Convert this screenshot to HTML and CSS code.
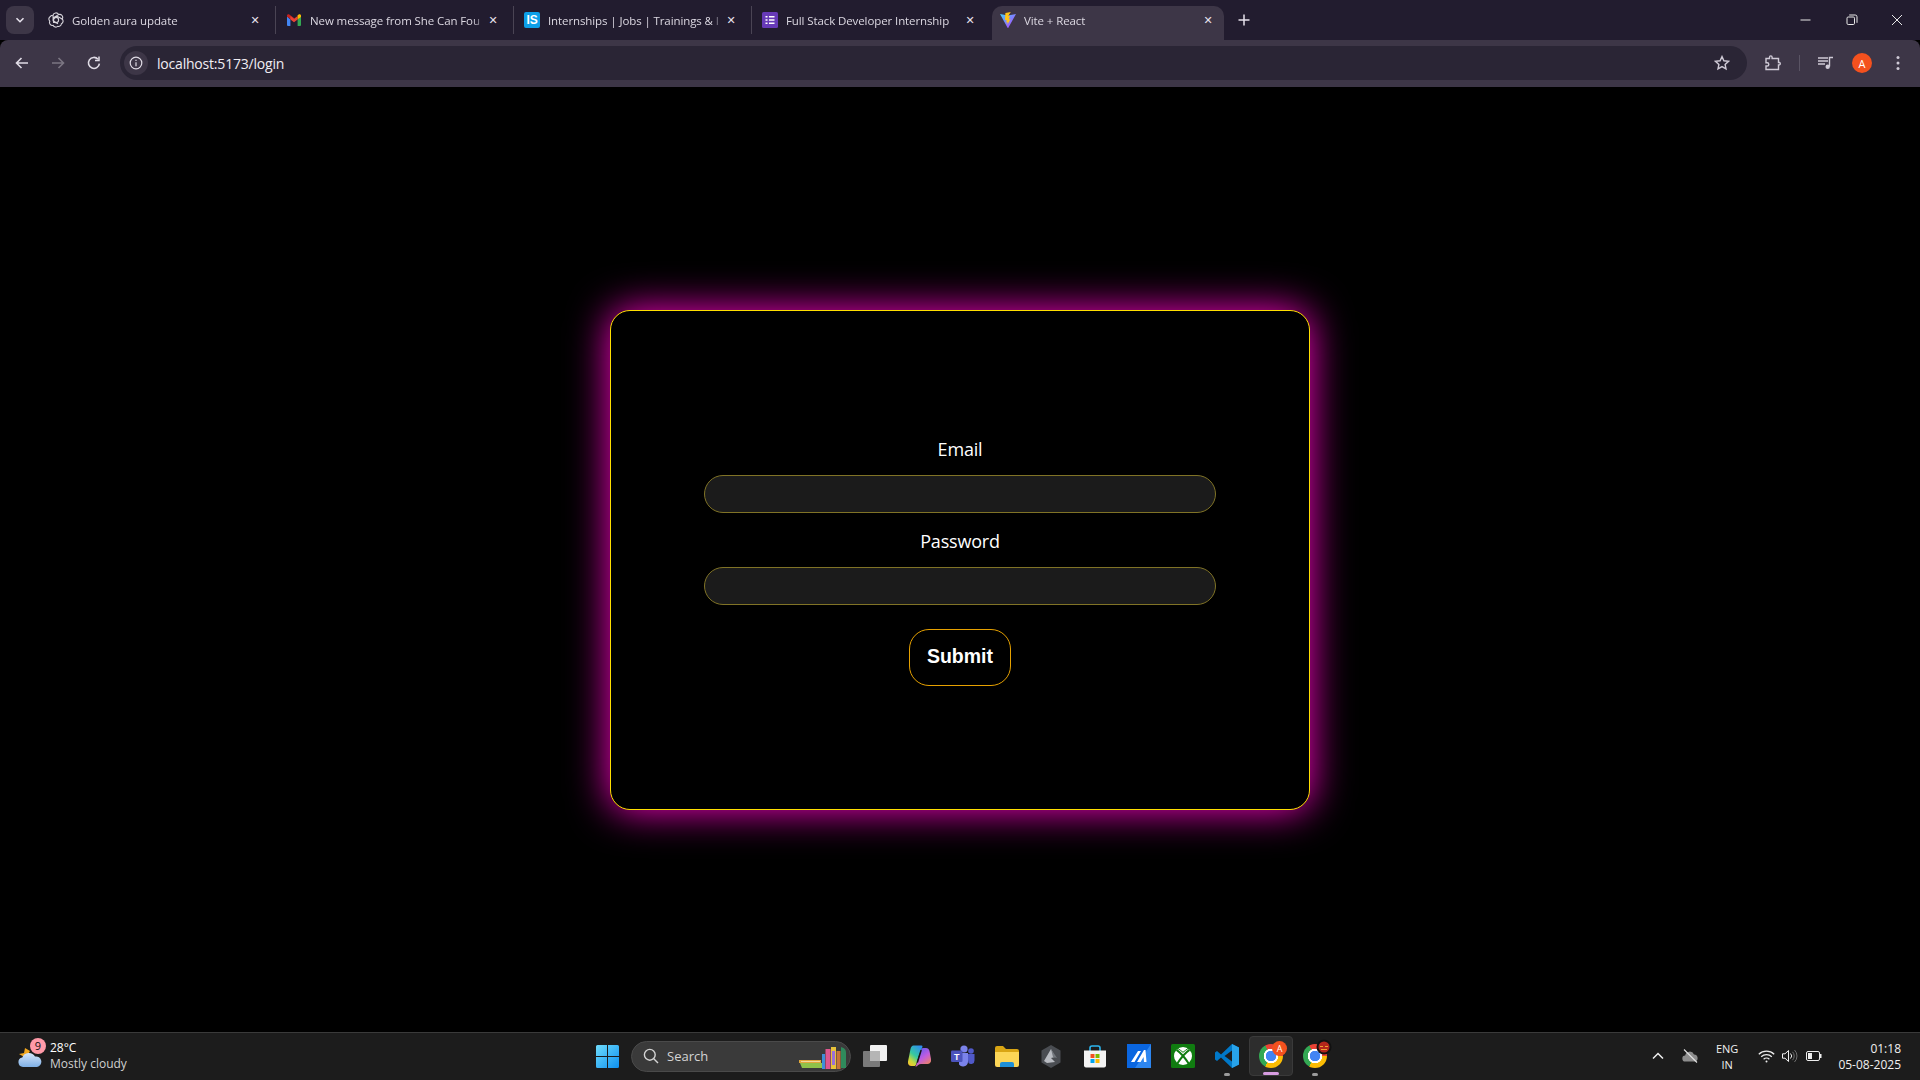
FILE: index.html
```html
<!DOCTYPE html>
<html>
<head>
    <title>Vite + React</title>
    <link rel="stylesheet" href="styles.css">
</head>
<body>
<div class="window">
    <div class="tabstrip">
        <div class="tab-menu">
            <svg width="10" height="10" viewBox="0 0 10 10"><path d="M1.5 3.2 5 6.7l3.5-3.5" fill="none" stroke="#e6e1ec" stroke-width="1.6"/></svg>
        </div>
        <div class="tab">
            <svg class="favicon" viewBox="0 0 16 16" fill="none" stroke="#d8d5dc" stroke-width="1.1">
                <circle cx="8" cy="8" r="2.6"/>
                <path d="M5 3.2A3 3 0 0 1 10.6 2.6 3 3 0 0 1 14.2 7 3 3 0 0 1 13.4 11.8 3 3 0 0 1 9.8 14.4 3 3 0 0 1 5.2 13.4 3 3 0 0 1 1.8 9.2 3 3 0 0 1 2.4 4.4 3 3 0 0 1 5 3.2Z"/>
                <path d="M5 3.2 5.2 9 10 11.8M10.6 2.6 5.6 5.6 5.6 11M14.2 7 9.4 4.4 5 7"/>
            </svg>
            <span class="tab-title">Golden aura update</span>
            <span class="tab-close">✕</span>
        </div>
        <div class="tab">
            <svg class="favicon" viewBox="0 0 16 16">
                <path d="M1 4.5V13a1 1 0 0 0 1 1h2.4V7.6z" fill="#4285f4"/>
                <path d="M15 4.5V13a1 1 0 0 1-1 1h-2.4V7.6z" fill="#34a853"/>
                <path d="M1 3.6C1 2.4 2.4 1.8 3.3 2.5L8 6l-1 3-6-4.5z" fill="#c5221f"/>
                <path d="M4.4 4 8 6.7 11.6 4v3.6L8 10.3 4.4 7.6z" fill="#ea4335"/>
                <path d="M15 3.6c0-1.2-1.4-1.8-2.3-1.1L11.6 3.3v4.3L15 5z" fill="#fbbc04"/>
            </svg>
            <span class="tab-title">New message from She Can Fou</span>
            <span class="tab-close">✕</span>
        </div>
        <div class="tab">
            <span class="favicon fav-is">IS</span>
            <span class="tab-title">Internships | Jobs | Trainings &amp; I</span>
            <span class="tab-close">✕</span>
        </div>
        <div class="tab">
            <svg class="favicon" viewBox="0 0 16 16">
                <rect width="16" height="16" rx="1.5" fill="#673ab7"/>
                <path d="M3.5 4h2v1.6h-2zM7 4h5.5v1.6H7zM3.5 7.2h2v1.6h-2zM7 7.2h5.5v1.6H7zM3.5 10.4h2V12h-2zM7 10.4h5.5V12H7z" fill="#fff"/>
            </svg>
            <span class="tab-title">Full Stack Developer Internship</span>
            <span class="tab-close">✕</span>
        </div>
        <div class="tab tab-active">
            <svg class="favicon" viewBox="0 0 16 16">
                <defs>
                    <linearGradient id="viteBody" x1="0" y1="0" x2="1" y2="1">
                        <stop offset="0" stop-color="#41d1ff"/>
                        <stop offset="1" stop-color="#bd34fe"/>
                    </linearGradient>
                </defs>
                <path d="M0 2 8 3.4 16 2 8.2 16a.3.3 0 0 1-.5 0z" fill="url(#viteBody)"/>
                <path d="M10.8 0 5.4 1.1 5 8.2l1.7-.4-.4 2.8 1.4-.4-.3 2.6 3.2-5.8-1.8.4 1.1-3.6-1.7.3z" fill="#ffc517"/>
            </svg>
            <span class="tab-title">Vite + React</span>
            <span class="tab-close">✕</span>
        </div>
        <div class="new-tab">
            <svg width="12" height="12" viewBox="0 0 12 12"><path d="M6 .5v11M.5 6h11" stroke="#e6e1ec" stroke-width="1.5"/></svg>
        </div>
        <div class="window-controls">
            <svg width="12" height="12" viewBox="0 0 12 12"><path d="M.5 6h10" stroke="#e8e8e8" stroke-width="1"/></svg>
            <svg width="12" height="12" viewBox="0 0 12 12" fill="none" stroke="#e8e8e8"><rect x="1" y="3" width="7.5" height="7.5" rx="1.2"/><path d="M3.2 1h6a1.8 1.8 0 0 1 1.8 1.8v6"/></svg>
            <svg width="12" height="12" viewBox="0 0 12 12"><path d="M1 1l10 10M11 1 1 11" stroke="#e8e8e8" stroke-width="1"/></svg>
        </div>
    </div>

    <div class="toolbar">
        <svg class="nav-icon" viewBox="0 0 16 16" fill="none" stroke="#e0dce6" stroke-width="1.6"><path d="M14 8H2.5M7.5 3 2.5 8l5 5"/></svg>
        <svg class="nav-icon" viewBox="0 0 16 16" fill="none" stroke="#7b7683" stroke-width="1.6"><path d="M2 8h11.5M8.5 3l5 5-5 5"/></svg>
        <svg class="nav-icon" viewBox="0 0 16 16" fill="none" stroke="#e0dce6" stroke-width="1.6"><path d="M13.4 8.6A5.5 5.5 0 1 1 12 4.2"/><path d="M13 1.5v4H9" stroke-width="1.5"/></svg>
        <div class="omnibox">
            <div class="site-info">
                <svg width="14" height="14" viewBox="0 0 14 14" fill="none" stroke="#e0dce6" stroke-width="1.2"><circle cx="7" cy="7" r="5.8"/><path d="M7 6.2v4M7 3.7v1.4"/></svg>
            </div>
            <span class="url">localhost:5173/login</span>
            <svg class="star" width="16" height="16" viewBox="0 0 16 16"><path d="M8 1.6l1.9 4.2 4.6.5-3.4 3.1.9 4.5L8 11.6l-4 2.3.9-4.5L1.5 6.3l4.6-.5z" fill="none" stroke="#cfcad6" stroke-width="1.4"/></svg>
        </div>
        <svg class="ext" width="16" height="16" viewBox="0 0 16 16"><path d="M1 3.5h3.5V2.2a1.3 1.3 0 0 1 2.6 0v1.3h6.4v4h1a1.3 1.3 0 0 1 0 2.4h-1v4.600H1V11h1.2a1.6 1.6 0 0 0 0-3.200H1z" fill="none" stroke="#cfcad6" stroke-width="1.4"/></svg>
        <span class="toolbar-sep"></span>
        <svg class="media" width="16" height="14" viewBox="0 0 16 14"><path d="M0 2h10M0 5h10M0 8h7" stroke="#cfcad6" stroke-width="1.3"/><path d="M11.500 10.500V1.500h3.500" fill="none" stroke="#cfcad6" stroke-width="1.4"/><circle cx="9.700" cy="10.800" r="2.200" fill="#cfcad6"/></svg>
        <span class="avatar">A</span>
        <svg class="kebab" width="4" height="16" viewBox="0 0 4 16" fill="#cfcad6"><circle cx="2" cy="2.500" r="1.500"/><circle cx="2" cy="8" r="1.500"/><circle cx="2" cy="13.500" r="1.500"/></svg>
    </div>

    <main class="page">
        <form class="login-card" onsubmit="event.preventDefault();">
            <label class="field-label" for="email">Email</label>
            <input class="field-input" id="email" type="email">
            <label class="field-label" for="password">Password</label>
            <input class="field-input" id="password" type="password">
            <button class="submit-btn" type="submit">Submit</button>
        </form>
    </main>

    <footer class="taskbar">
        <div class="weather">
            <div class="weather-icon">
                <svg width="24" height="24" viewBox="0 0 24 24">
                    <defs>
                        <linearGradient id="cloudFill" x1="0" y1="0" x2="0" y2="1">
                            <stop offset="0" stop-color="#d6e6fa"/>
                            <stop offset="1" stop-color="#7fb0e6"/>
                        </linearGradient>
                    </defs>
                    <path d="M1 10l5-1 1-5 5 3-4 7z" fill="#f2a71e"/>
                    <path d="M5 23a4.800 4.800 0 0 1-.7-9.500A7 7 0 0 1 17 12.500a5.300 5.300 0 0 1 2 10.500z" fill="url(#cloudFill)"/>
                </svg>
                <span class="weather-badge">9</span>
            </div>
            <div class="weather-text">
                <span class="temp">28°C</span>
                <span class="sky">Mostly cloudy</span>
            </div>
        </div>

        <div class="task-icons">
            <div class="task-slot">
                <svg width="23" height="23" viewBox="0 0 23 23">
                    <defs>
                        <linearGradient id="winFill" x1="0" y1="0" x2="1" y2="1">
                            <stop offset="0" stop-color="#6fdcfb"/>
                            <stop offset="1" stop-color="#0d90f0"/>
                        </linearGradient>
                    </defs>
                    <path d="M0 1.500A1.500 1.500 0 0 1 1.500 0H11v11H0zM12 0h9.500A1.500 1.500 0 0 1 23 1.500V11H12zM0 12h11v11H1.500A1.500 1.500 0 0 1 0 21.500zM12 12h11v9.500a1.500 1.500 0 0 1-1.500 1.500H12z" fill="url(#winFill)"/>
                </svg>
            </div>
            <div class="search-pill">
                <svg width="16" height="16" viewBox="0 0 16 16" fill="none" stroke="#d4d4d4" stroke-width="1.4"><circle cx="6.800" cy="6.800" r="5.400"/><path d="M10.800 10.800 15 15"/></svg>
                <span class="search-text">Search</span>
                <svg class="books" width="48" height="24" viewBox="0 0 48 24">
                    <path d="M0 15h22v3H0z" fill="#e0a73c"/>
                    <path d="M1 18h22v5H3z" fill="#8fc24a"/>
                    <path d="M2 16h19v1H2z" fill="#f0d9a0"/>
                    <path d="M23 9h3v15h-3z" fill="#3f8fd8"/>
                    <path d="M26.500 4h5v20h-5z" fill="#e0568f"/>
                    <path d="M32 2h5v22h-5z" fill="#e8c23a"/>
                    <path d="M33 6h3v14h-3z" fill="#9a6fd8"/>
                    <path d="M37.500 6h4v18h-4z" fill="#c9743a"/>
                    <path d="M42 2c3 1 5 2 5 6v15h-5z" fill="#2f8a5c"/>
                </svg>
            </div>
            <div class="task-slot">
                <svg width="24" height="22" viewBox="0 0 24 22">
                    <rect x="7" y="0" width="17" height="16" rx="1" fill="#f2f2f2"/>
                    <rect x="0" y="6" width="17" height="16" rx="1" fill="#7a7a7a"/>
                    <rect x="7" y="6" width="10" height="10" fill="#b5b5b5"/>
                </svg>
            </div>
            <div class="task-slot">
                <svg width="24" height="22" viewBox="0 0 24 22">
                    <defs>
                        <linearGradient id="copilotA" x1="0.800" y1="0" x2="0.200" y2="1">
                            <stop offset="0" stop-color="#2f8df0"/>
                            <stop offset=".5" stop-color="#35c8a0"/>
                            <stop offset=".8" stop-color="#c8d83a"/>
                            <stop offset="1" stop-color="#f4c430"/>
                        </linearGradient>
                        <linearGradient id="copilotB" x1="0.200" y1="0" x2="0.800" y2="1">
                            <stop offset="0" stop-color="#5a5cf0"/>
                            <stop offset=".5" stop-color="#c05ce0"/>
                            <stop offset="1" stop-color="#f58a4a"/>
                        </linearGradient>
                    </defs>
                    <path d="M6.500 0.500h8c1 0 1.200.8.800 1.800L12 10l-3 9.500c-.4 1-1 1.500-2 1.500H4.500C2 21 .5 19 1 16.500L3.500 4C4 1.800 5 .5 6.500.5z" fill="url(#copilotA)"/>
                    <path d="M16 3h3c1.800 0 3 1.200 3.500 3L24 14c.6 3-1 5-3.500 5H14c-2.500 0-3 1.500-5.500 3L13 9l1-4c.3-1.200 1-2 2-2z" fill="url(#copilotB)"/>
                    <path d="M14 5.500 10.500 17" stroke="#141414" stroke-width="1.500" stroke-linecap="round"/>
                </svg>
            </div>
            <div class="task-slot">
                <svg width="24" height="22" viewBox="0 0 24 22">
                    <circle cx="13" cy="4" r="3.600" fill="#7b83eb"/>
                    <circle cx="20" cy="6" r="2.800" fill="#5059c9"/>
                    <path d="M16 9h7.500v6.500a3.500 3.500 0 0 1-6 2.500z" fill="#5059c9"/>
                    <path d="M8 8h9v9a5 5 0 0 1-9 2.500z" fill="#7b83eb"/>
                    <rect x="0" y="5.500" width="11.500" height="11.500" rx="1.200" fill="#4b53bc"/>
                    <text class="teams-t" x="5.750" y="14.500" text-anchor="middle">T</text>
                </svg>
            </div>
            <div class="task-slot">
                <svg width="24" height="21" viewBox="0 0 24 21">
                    <path d="M0 2a2 2 0 0 1 2-2h6l3 3h11a2 2 0 0 1 2 2v4H0z" fill="#d9a514"/>
                    <path d="M0 6h24v13a2 2 0 0 1-2 2H2a2 2 0 0 1-2-2z" fill="#fcd657"/>
                    <path d="M5 21v-3a2 2 0 0 1 2-2h10a2 2 0 0 1 2 2v3z" fill="#1e90d8"/>
                </svg>
            </div>
            <div class="task-slot">
                <svg width="22" height="23" viewBox="0 0 22 23">
                    <path d="M11 0l9.500 5.500v12L11 23 1.500 17.500v-12z" fill="#4a4d52"/>
                    <path d="M11 4 4 16l3 2 8-1-4-4 4-1z" fill="#b9bcc2"/>
                    <path d="M11 4l6 9-4-1z" fill="#74787e"/>
                </svg>
            </div>
            <div class="task-slot">
                <svg width="24" height="24" viewBox="0 0 24 24">
                    <path d="M7 7V4a2 2 0 0 1 2-2h6a2 2 0 0 1 2 2v3" fill="none" stroke="#2cb5ee" stroke-width="1.600"/>
                    <path d="M1 6.500h22v15a2 2 0 0 1-2 2H3a2 2 0 0 1-2-2z" fill="#f3f3f3"/>
                    <path d="M7.500 10H11.500v4H7.500z" fill="#f25022"/>
                    <path d="M12.500 10h4v4h-4z" fill="#7fba00"/>
                    <path d="M7.500 15h4v4h-4z" fill="#00a4ef"/>
                    <path d="M12.500 15h4v4h-4z" fill="#ffb900"/>
                </svg>
            </div>
            <div class="task-slot">
                <svg width="24" height="24" viewBox="0 0 24 24">
                    <rect width="24" height="24" fill="#0a66e0"/>
                    <path d="M24 0v24H8z" fill="#2d86f0"/>
                    <path d="M4 18 11 7h3L7.500 18zM10 18 17 6h1.500l1 12h-2.500l-.4-5-3 5z" fill="#fff"/>
                </svg>
            </div>
            <div class="task-slot">
                <svg width="24" height="24" viewBox="0 0 24 24">
                    <rect width="24" height="24" rx="1.500" fill="#107c10"/>
                    <circle cx="12" cy="12" r="9" fill="#fff"/>
                    <path d="M5.500 5.800C9.500 8.500 14.500 14.500 18 20M18.500 5.800C14.500 8.500 9.500 14.500 6 20" fill="none" stroke="#107c10" stroke-width="2"/>
                    <path d="M7 4.500C9 6 10.500 7 12 8.300 13.500 7 15 6 17 4.500" fill="none" stroke="#107c10" stroke-width="1"/>
                </svg>
            </div>
            <div class="task-slot has-dot">
                <svg width="24" height="24" viewBox="0 0 24 24">
                    <path d="M17 0l7 3.500v17L17 24 6 13.500 2 17 0 15.500V8.500L2 7l4 3.500z" fill="#0078c8"/>
                    <path d="M17 0l7 3.500v17L17 24z" fill="#28a3ea"/>
                    <path d="M17 6.500v11L9.500 12z" fill="#1c1c1c"/>
                </svg>
            </div>
            <div class="task-slot slot-active">
                <span class="chrome"></span>
                <span class="chrome-badge">A</span>
            </div>
            <div class="task-slot has-dot">
                <span class="chrome"></span>
                <svg class="chrome-pumpkin" width="16" height="16" viewBox="0 0 16 16">
                    <circle cx="8" cy="8" r="7.500" fill="#111"/>
                    <circle cx="8" cy="8" r="5.500" fill="#b3261c"/>
                    <path d="M4 7h3v1H4zM9 7h3v1H9zM5 10h6v1H5z" fill="#f0a030"/>
                </svg>
            </div>
        </div>

        <div class="tray">
            <svg class="tray-chevron" width="12" height="8" viewBox="0 0 12 8"><path d="M1 6.500 6 1.500l5 5" fill="none" stroke="#eee" stroke-width="1.500"/></svg>
            <svg class="tray-cloud" width="17" height="14" viewBox="0 0 17 14">
                <path d="M3.500 12.500a3 3 0 0 1-.3-6 4.600 4.600 0 0 1 8.800-1 3.600 3.600 0 0 1 1.200 7z" fill="#8d8d8d"/>
                <path d="M2 .5l13 13" stroke="#e4e4e4" stroke-width="1.100"/>
            </svg>
            <div class="lang"><span>ENG</span><span>IN</span></div>
            <svg class="tray-wifi" width="17" height="13" viewBox="0 0 17 13" fill="none" stroke="#eee" stroke-width="1.200">
                <path d="M.8 4.300a11 11 0 0 1 15.400 0M3.200 6.800a7.600 7.600 0 0 1 10.600 0M5.600 9.200a4.200 4.200 0 0 1 5.800 0"/>
                <circle cx="8.500" cy="11.500" r="1" fill="#eee" stroke="none"/>
            </svg>
            <svg class="tray-volume" width="16" height="14" viewBox="0 0 16 14" fill="none" stroke="#eee" stroke-width="1">
                <path d="M.5 4.800h2.500L6.500 1.500v11L3 9.200H.5z"/>
                <path d="M8.500 4.500a3.500 3.500 0 0 1 0 5"/>
                <path d="M10.500 2.800a6 6 0 0 1 0 8.400M12.500 1a8.500 8.500 0 0 1 0 12" stroke="#6f6f6f"/>
            </svg>
            <svg class="tray-battery" width="16" height="10" viewBox="0 0 16 10">
                <rect x=".5" y=".5" width="13" height="9" rx="1.500" fill="none" stroke="#eee"/>
                <rect x="2" y="2" width="4" height="6" fill="#eee"/>
                <rect x="14" y="3" width="1.500" height="4" fill="#eee"/>
            </svg>
            <div class="clock"><span>01:18</span><span>05-08-2025</span></div>
        </div>
    </footer>
</div>
</body>
</html>
```

FILE: styles.css
```css
* {
    box-sizing: border-box;
}

html, body {
    margin: 0;
    height: 100%;
    background: #000;
    overflow: hidden;
}

body {
    font-family: "Open Sans", "Noto Sans", sans-serif;
}

.window {
    display: flex;
    flex-direction: column;
    height: 1080px;
}

/* browser tabs */
.tabstrip {
    display: flex;
    height: 40px;
    flex-shrink: 0;
    padding: 6px 0 0 6px;
    background: #221c2f;
}

.tab-menu {
    display: flex;
    align-items: center;
    justify-content: center;
    width: 28px;
    height: 28px;
    margin-right: 4px;
    border-radius: 8px;
    background: #3d3647;
}

.tab {
    display: flex;
    align-items: center;
    width: 238px;
    height: 28px;
    padding: 0 12px 0 10px;
    border-right: 1px solid #4a4454;
    color: #dcd8e2;
    font-size: 11.5px;
    letter-spacing: -0.1px;
}

.tab:nth-child(5) {
    border-right: none;
}

.tab-active {
    width: 232px;
    height: 34px;
    margin-left: 2px;
    padding: 0 8px 6px 8px;
    border-right: none;
    border-radius: 10px 10px 0 0;
    background: #3d3647;
}

.favicon {
    display: block;
    flex-shrink: 0;
    width: 16px;
    height: 16px;
    margin-right: 8px;
}

.fav-is {
    border-radius: 2px;
    background: #0d9fe8;
    color: #fff;
    font-family: "Liberation Sans", sans-serif;
    font-size: 12px;
    font-weight: 700;
    line-height: 16px;
    text-align: center;
}

.tab-title {
    flex: 1;
    overflow: hidden;
    white-space: nowrap;
    -webkit-mask-image: linear-gradient(to left, transparent, #000 12px);
    mask-image: linear-gradient(to left, transparent, #000 12px);
}

.tab-close {
    width: 16px;
    color: #e6e1ec;
    font-family: "DejaVu Sans", sans-serif;
    font-size: 11px;
    text-align: center;
}

.new-tab {
    display: flex;
    align-items: center;
    justify-content: center;
    width: 32px;
    height: 28px;
    margin-left: 4px;
}

.window-controls {
    display: flex;
    align-items: center;
    justify-content: space-between;
    width: 103px;
    height: 28px;
    margin-left: auto;
    margin-right: 17px;
}

/* address bar row */
.toolbar {
    display: flex;
    align-items: center;
    flex-shrink: 0;
    height: 47px;
    padding: 0 20px 1px 14px;
    border-radius: 8px 8px 0 0;
    background: #3d3647;
}

.nav-icon {
    width: 16px;
    height: 16px;
    margin-right: 20px;
}

.omnibox {
    display: flex;
    align-items: center;
    flex: 1;
    height: 34px;
    margin-left: -2px;
    padding: 0 17px 0 4px;
    border-radius: 17px;
    background: #2a2535;
}

.site-info {
    display: flex;
    align-items: center;
    justify-content: center;
    width: 24px;
    height: 24px;
    border-radius: 50%;
    background: #3d3647;
}

.url {
    flex: 1;
    margin-left: 9px;
    color: #f0edf3;
    font-size: 14px;
    letter-spacing: -0.2px;
}

.ext {
    margin-left: 18px;
}

.toolbar-sep {
    width: 1px;
    height: 16px;
    margin: 0 18px;
    background: #5a5464;
}

.avatar {
    display: flex;
    align-items: center;
    justify-content: center;
    width: 20px;
    height: 20px;
    margin-left: 18px;
    border-radius: 50%;
    background: #f4511e;
    color: #fff;
    font-size: 11px;
}

.kebab {
    margin: 0 0 0 24px;
}

/* login form */
.page {
    display: flex;
    align-items: center;
    justify-content: center;
    flex: 1;
    padding-top: 1px;
    background: #000;
}

.login-card {
    display: flex;
    flex-direction: column;
    align-items: center;
    width: 700px;
    height: 500px;
    padding-top: 125px;
    border: 1px solid #ffdf00;
    border-radius: 20px;
    background: #000;
    box-shadow: 0 0 40px #ff00c8;
}

.field-label {
    height: 28px;
    margin-bottom: 11px;
    color: #fff;
    font-size: 18px;
    line-height: 26px;
    letter-spacing: -0.2px;
}

.field-input {
    display: block;
    width: 512px;
    height: 38px;
    margin-bottom: 15px;
    border: 1px solid #807326;
    border-radius: 19px;
    outline: none;
    background: #1b1b1b;
    color: #fff;
}

.submit-btn {
    width: 102px;
    height: 57px;
    margin-top: 9px;
    padding: 0 0 2px;
    border: 1px solid #e6a100;
    border-radius: 20px;
    background: #000;
    color: #fff;
    font-family: "Liberation Sans", Arial, sans-serif;
    font-size: 19.5px;
    font-weight: 700;
}

/* windows taskbar */
.taskbar {
    display: grid;
    grid-template-columns: 1fr auto 1fr;
    align-items: center;
    flex-shrink: 0;
    height: 48px;
    padding-bottom: 1px;
    border-top: 1px solid #3a3a3a;
    background: #1c1c1c;
    color: #fff;
}

.weather {
    display: flex;
    align-items: center;
    padding-left: 18px;
}

.weather-icon {
    position: relative;
    width: 26px;
    height: 24px;
    margin-right: 6px;
}

.weather-badge {
    position: absolute;
    top: -6px;
    left: 12px;
    width: 16px;
    height: 16px;
    border-radius: 50%;
    background: #ff9aa8;
    color: #111;
    font-size: 11px;
    line-height: 16px;
    text-align: center;
}

.weather-text {
    display: flex;
    flex-direction: column;
    font-size: 12px;
    line-height: 16px;
}

.sky {
    color: #d0d0d0;
}

.task-icons {
    display: flex;
    align-items: center;
    margin-left: 2px;
}

.task-slot {
    position: relative;
    display: flex;
    align-items: center;
    justify-content: center;
    width: 44px;
    height: 40px;
    border-radius: 4px;
}

.search-pill {
    display: flex;
    align-items: center;
    width: 220px;
    height: 31px;
    margin: 0 2px;
    padding-left: 11px;
    border: 1px solid #4a4a4a;
    border-radius: 16px;
    background: #3a3a3a;
}

.search-text {
    flex: 1;
    margin-left: 8px;
    color: #d4d4d4;
    font-size: 13px;
}

.books {
    margin-right: 3px;
    margin-top: 2px;
}

.teams-t {
    fill: #fff;
    font-family: "Liberation Sans", sans-serif;
    font-size: 9px;
    font-weight: 700;
}

.has-dot::after {
    content: "";
    position: absolute;
    bottom: 0;
    left: 19px;
    width: 6px;
    height: 3px;
    border-radius: 2px;
    background: #9b9b9b;
}

.slot-active {
    border: 1px solid #3a3a3a;
    background: #2d2d2d;
}

.slot-active::after {
    content: "";
    position: absolute;
    bottom: 0;
    left: 13px;
    width: 16px;
    height: 3px;
    border-radius: 2px;
    background: #d79ce0;
}

.chrome {
    display: block;
    width: 24px;
    height: 24px;
    border-radius: 50%;
    background:
        radial-gradient(circle, #4285f4 0 5px, #fff 5.500px 7px, transparent 7.500px),
        conic-gradient(from -30deg, #ea4335 0 120deg, #fbbc04 120deg 240deg, #34a853 240deg);
}

.chrome-badge {
    position: absolute;
    top: 4px;
    right: 5px;
    width: 15px;
    height: 15px;
    border-radius: 50%;
    background: #f4511e;
    color: #fff;
    font-size: 9px;
    line-height: 15px;
    text-align: center;
}

.chrome-pumpkin {
    position: absolute;
    top: 3px;
    right: 5px;
}

.tray {
    display: flex;
    align-items: center;
    justify-content: flex-end;
    padding-right: 19px;
    font-size: 11px;
    line-height: 16px;
    color: #f0f0f0;
}

.tray-cloud {
    margin-left: 18px;
}

.lang {
    display: flex;
    flex-direction: column;
    align-items: center;
    margin-top: 2px;
    margin-left: 17px;
}

.tray-wifi {
    margin-left: 20px;
}

.tray-volume {
    margin-left: 7px;
}

.tray-battery {
    margin-left: 8px;
}

.clock {
    display: flex;
    flex-direction: column;
    align-items: flex-end;
    margin-top: 2px;
    margin-left: 16px;
    font-size: 12px;
}
```
